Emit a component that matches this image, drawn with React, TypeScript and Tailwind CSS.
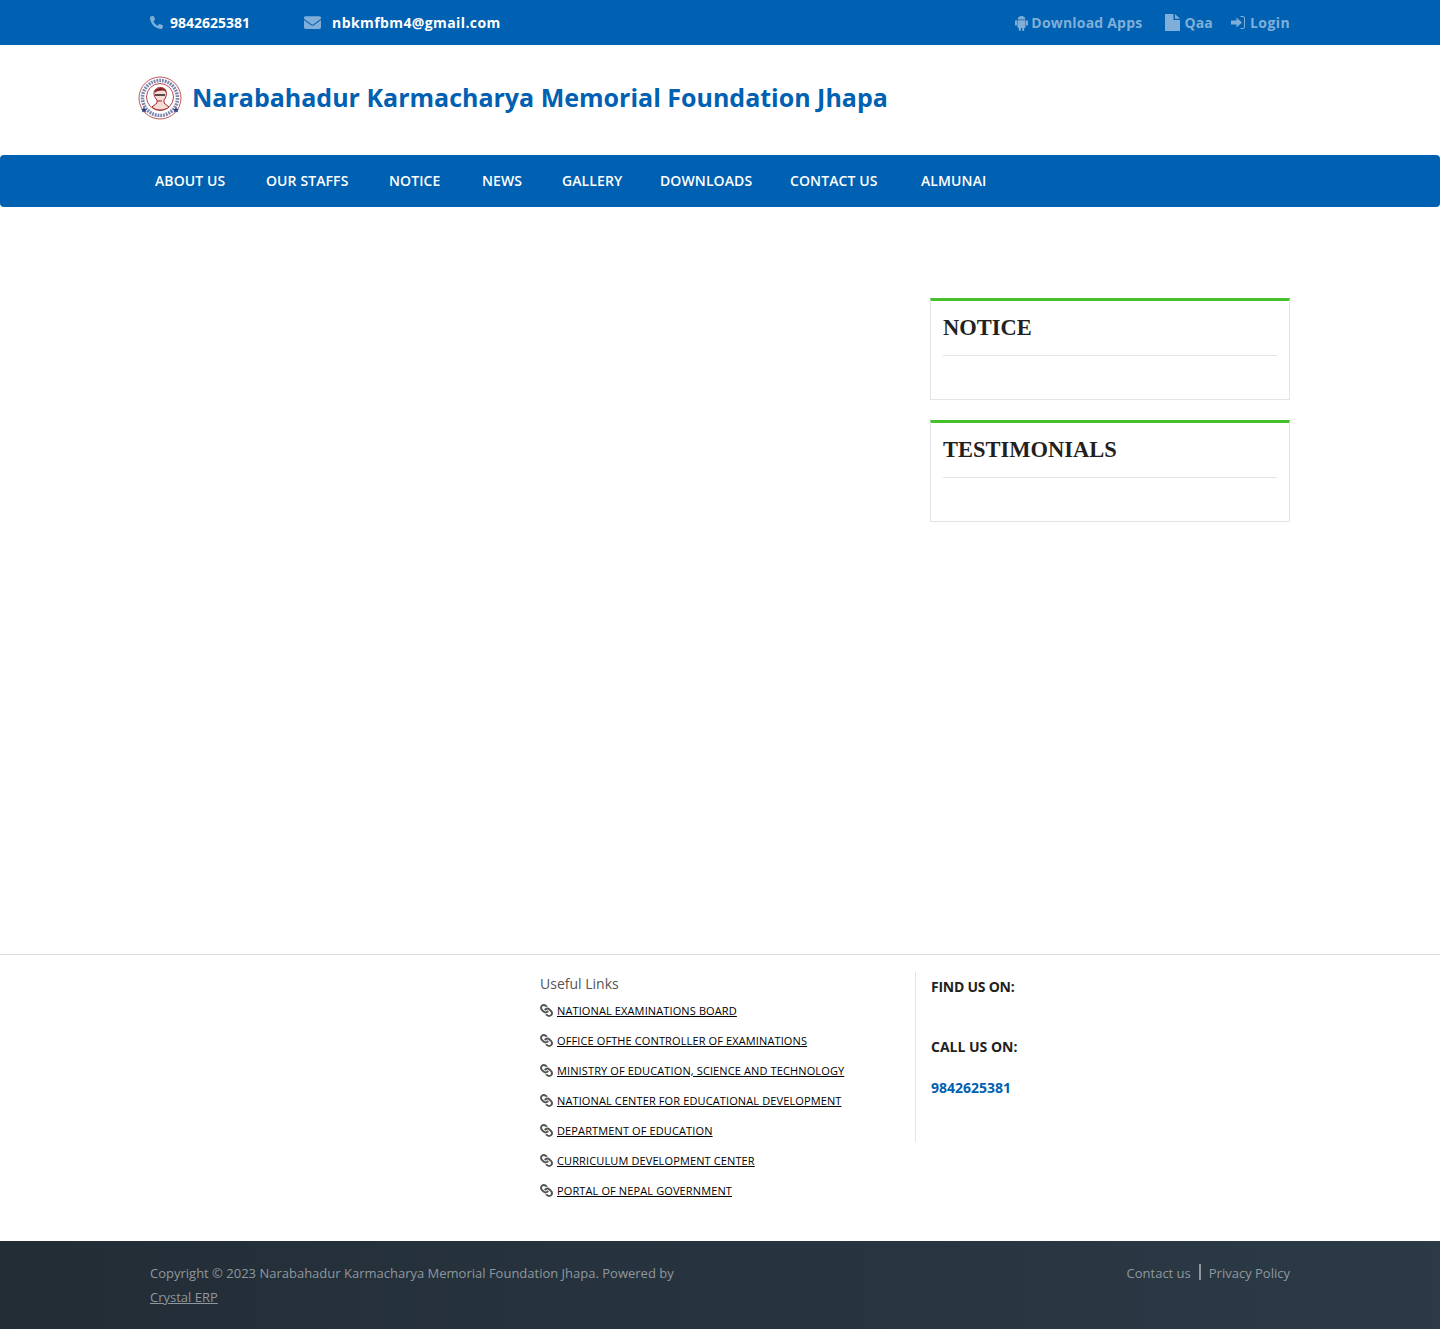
import { FaPhone, FaEnvelope, FaLink } from "react-icons/fa";

const navItems = ["ABOUT US", "OUR STAFFS", "NOTICE", "NEWS", "GALLERY", "DOWNLOADS", "CONTACT US", "ALMUNAI"];

const usefulLinks = [
  "NATIONAL EXAMINATIONS BOARD",
  "OFFICE OFTHE CONTROLLER OF EXAMINATIONS",
  "MINISTRY OF EDUCATION, SCIENCE AND TECHNOLOGY",
  "NATIONAL CENTER FOR EDUCATIONAL DEVELOPMENT",
  "DEPARTMENT OF EDUCATION",
  "CURRICULUM DEVELOPMENT CENTER",
  "PORTAL OF NEPAL GOVERNMENT",
];

function Logo() {
  return (
    <svg width="44" height="44" viewBox="0 0 44 44" className="shrink-0">
      <circle cx="22" cy="22" r="21" fill="#fdfdfd" stroke="#b5484a" strokeWidth="0.9" />
      <circle cx="22" cy="22" r="17.500" fill="none" stroke="#46508a" strokeWidth="3.500" strokeDasharray="1.800 1" opacity="0.7" />
      <circle cx="22" cy="21" r="13.500" fill="#fff" stroke="#b5484a" strokeWidth="1" />
      <path d="M17 14c3-4 10-3 11 1 1 3 0 7-2 9v3l5 4c-2 2-6 3-9 3-3 0-6-1-8-3l5-4v-3c-3-3-4-7-2-10z" fill="#f6dcd6" stroke="#a5282c" strokeWidth="1" />
      <path d="M16.500 17c0-6 11-7 12-1-3-2-8-2-12 1z" fill="#7e1c20" />
      <path d="M17 19h4M23 19h4M21 19h2" stroke="#2a1a1a" strokeWidth="1.400" />
      <path d="M19 25h5" stroke="#a5282c" strokeWidth="1" />
      <path d="M6 31l1 2 2 0-1.500 1.500.5 2-2-1-2 1 .5-2L3 33l2 0zM38 31l1 2 2 0-1.500 1.500.5 2-2-1-2 1 .5-2L35 33l2 0z" fill="#2d3f7c" />
    </svg>
  );
}

function Android() {
  return (
    <svg width="13" height="16" viewBox="0 0 13 16" fill="currentColor" className="shrink-0">
      <path d="M2.500 4.500C2.700 2.400 4.400 1 6.500 1s3.800 1.400 4 3.500z" />
      <path d="M2.500 5.200h8V12a1 1 0 0 1-1 1h-6a1 1 0 0 1-1-1z" />
      <rect x="0" y="5.200" width="2" height="5.500" rx="1" />
      <rect x="11" y="5.200" width="2" height="5.500" rx="1" />
      <rect x="3.800" y="12" width="2" height="4" rx="1" />
      <rect x="7.200" y="12" width="2" height="4" rx="1" />
    </svg>
  );
}

function FileIcon() {
  return (
    <svg width="15" height="17" viewBox="0 0 15 17" fill="currentColor" className="shrink-0">
      <path d="M0 0h8.500v6H15v11H0z" />
      <path d="M10 0l5 4.700h-5z" />
    </svg>
  );
}

function SignIn() {
  return (
    <svg width="14" height="13" viewBox="0 0 14 13" fill="currentColor" className="shrink-0">
      <path d="M5.500 1.500 11 6.500l-5.500 5V8.500H0v-4h5.500z" />
      <path d="M9.500.5h2.500A1.500 1.500 0 0 1 13.500 2v9a1.500 1.500 0 0 1-1.500 1.500H9.500" fill="none" stroke="currentColor" strokeWidth="1" />
    </svg>
  );
}

function SideBox({ title }: { title: string }) {
  return (
    <div className="h-[102px] border border-[#e1e5e8] border-t-[3px] border-t-[#46c12c] px-3 pt-[14px]">
      <h3 className="h-[41px] border-b border-[#e1e5e8] font-['Liberation_Serif',serif] text-[22.5px] font-bold leading-[26px] text-[#231f20]">
        {title}
      </h3>
    </div>
  );
}

export default function App() {
  return (
    <div className="min-h-[1329px] bg-white font-['Open_Sans',sans-serif]">
      {/* Barra superior */}
      <div className="h-[45px] bg-[#0060b1]">
        <div className="mx-auto flex h-full w-[1140px] items-center justify-between text-sm font-bold">
          <div className="flex items-center text-white">
            <FaPhone className="mr-[7px] size-[13px] -scale-x-100 text-[#7fafd8]" />
            <span>9842625381</span>
            <FaEnvelope className="ml-[54px] mr-[11px] size-[17px] text-[#7fafd8]" />
            <span className="tracking-[0.4px]">nbkmfbm4@gmail.com</span>
          </div>
          <div className="flex items-center tracking-[0.2px] text-[#7fafd8]">
            <Android />
            <span className="ml-[3px]">Download Apps</span>
            <span className="ml-[23px] mr-[4px]"><FileIcon /></span>
            <span>Qaa</span>
            <span className="ml-[18px] mr-[5px]"><SignIn /></span>
            <span className="tracking-[0.4px]">Login</span>
          </div>
        </div>
      </div>

      {/* Logo e nome */}
      <div className="mx-auto flex h-[110px] w-[1170px] items-center pb-[4px] pl-[3px]">
        <Logo />
        <h1 className="ml-[10px] text-[25px] font-bold text-[#0060b1]">
          Narabahadur Karmacharya Memorial Foundation Jhapa
        </h1>
      </div>

      {/* Menu */}
      <nav className="h-[52px] rounded-[4px] bg-[#0060b1]">
        <ul className="mx-auto grid h-full w-[1170px] grid-cols-[111px_123px_93px_80px_98px_130px_131px_auto] items-center pl-5 text-sm font-semibold tracking-[0.1px] text-white">
          {navItems.map((item) => (
            <li key={item}>{item}</li>
          ))}
        </ul>
      </nav>

      {/* Conteúdo */}
      <main className="mx-auto flex h-[747px] w-[1140px] justify-end pt-[91px]">
        <aside className="flex w-[360px] flex-col gap-5">
          <SideBox title="NOTICE" />
          <SideBox title="TESTIMONIALS" />
        </aside>
      </main>

      {/* Rodapé */}
      <footer className="h-[287px] border-t border-[#dddddd]">
        <div className="mx-auto flex w-[1170px] pt-[17px]">
          <div className="w-[390px]" />
          <div className="h-[170px] w-[391px] border-r border-[#e1e5e8] pl-[15px]">
            <h4 className="text-sm leading-[24px] text-[#555555]">Useful Links</h4>
            <ul>
              {usefulLinks.map((link) => (
                <li key={link} className="flex h-[30px] items-center text-[#555555]">
                  <FaLink className="mr-[4px] size-[13px] -translate-y-[1px] rotate-90 text-[#555555]" />
                  <a className="text-[11px] tracking-[0.12px] text-black underline">{link}</a>
                </li>
              ))}
            </ul>
          </div>
          <div className="pl-[15px] text-sm text-[#231f20]">
            <p className="mt-[3px] font-bold leading-[24px] tracking-[-0.25px]">FIND US ON:</p>
            <p className="mt-[36px] font-bold leading-[24px]">CALL US ON:</p>
            <p className="mt-[17px] font-bold leading-[24px] text-[#0060b1]">9842625381</p>
          </div>
        </div>
      </footer>

      {/* Copyright */}
      <div className="h-[88px] bg-gradient-to-r from-[#222d36] to-[#2c3a47] pt-5 text-[13px] leading-[24px] text-[#8f979e]">
        <div className="mx-auto flex w-[1140px] justify-between">
          <p className="w-[540px]">
            Copyright © 2023 Narabahadur Karmacharya Memorial Foundation Jhapa. Powered by{" "}
            <a className="underline">Crystal ERP</a>
          </p>
          <div className="flex items-center self-start">
            <span>Contact us</span>
            <span className="mx-[8px] h-[16px] w-[2px] -translate-y-[1px] bg-[#8f979e]" />
            <span>Privacy Policy</span>
          </div>
        </div>
      </div>
    </div>
  );
}
